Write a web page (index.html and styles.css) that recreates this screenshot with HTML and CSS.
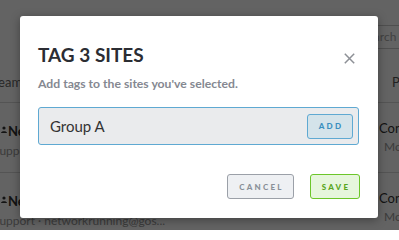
FILE: index.html
```html
<!DOCTYPE html>
<html>
<head>
<meta charset="utf-8">
<link rel="stylesheet" href="styles.css">
</head>
<body>
<div class="page">
  <div class="head-row">
    <div class="head-left">Team</div>
    <div class="head-right">
      <div class="search">Search</div>
      <div class="plan">Plan</div>
    </div>
  </div>
  <div class="row">
    <div class="site">
      <div class="site-name"><svg class="user" width="6" height="7" viewBox="0 0 6 7"><circle cx="3" cy="2" r="1.6" fill="#333"/><path d="M0 7 C0 4.5 6 4.5 6 7 Z" fill="#333"/></svg>Network Running</div>
      <div class="site-sub">Support · networkrunning@gos...</div>
    </div>
    <div class="status">
      <div class="status-main">Connected</div>
      <div class="status-sub">Monday</div>
    </div>
  </div>
  <div class="row">
    <div class="site">
      <div class="site-name"><svg class="user" width="6" height="7" viewBox="0 0 6 7"><circle cx="3" cy="2" r="1.6" fill="#333"/><path d="M0 7 C0 4.5 6 4.5 6 7 Z" fill="#333"/></svg>Network Running</div>
      <div class="site-sub">Support · networkrunning@gos...</div>
    </div>
    <div class="status">
      <div class="status-main">Connected</div>
      <div class="status-sub">Monday</div>
    </div>
  </div>
</div>
<div class="backdrop"></div>
<div class="modal">
  <div class="modal-head">
    <h1 class="title">TAG 3 SITES</h1>
    <svg class="close" width="11" height="11" viewBox="0 0 11 11"><path d="M0.8 0.8 L10.2 10.2 M10.2 0.8 L0.8 10.2" stroke="#8d9096" stroke-width="1.5" fill="none"/></svg>
  </div>
  <p class="subtitle">Add tags to the sites you've selected.</p>
  <div class="tag-input">
    <span class="tag-text">Group A</span>
    <button class="btn btn-add">ADD</button>
  </div>
  <div class="actions">
    <button class="btn btn-cancel">CANCEL</button>
    <button class="btn btn-save">SAVE</button>
  </div>
</div>
</body>
</html>
```
FILE: styles.css
```css
* { box-sizing: border-box; }
html, body { margin: 0; padding: 0; }
body {
  width: 399px;
  height: 230px;
  overflow: hidden;
  position: relative;
  background: #fff;
  font-family: Lato, "Liberation Sans", sans-serif;
  color: #333;
}
.page { width: 399px; overflow: hidden; }
.head-row {
  height: 103px;
  border-bottom: 1px solid #d8d8d8;
  display: flex;
  justify-content: space-between;
}
.head-left {
  margin-top: 74px;
  margin-left: -8px;
  font-size: 13px;
  color: #666;
}
.head-right {
  display: flex;
  flex-direction: column;
  align-items: flex-start;
  width: 40px;
}
.search {
  margin-top: 25px;
  height: 24px;
  width: 60px;
  margin-left: -20px;
  border-top: 1px solid #ccc;
  border-bottom: 1px solid #ccc;
  padding-left: 22px;
  font-size: 12px;
  line-height: 22px;
  color: #aaa;
}
.plan {
  margin-top: 25px;
  margin-left: 33px;
  font-size: 13px;
  color: #555;
  white-space: nowrap;
}
.row {
  height: 70px;
  border-bottom: 1px solid #d8d8d8;
  display: flex;
  justify-content: space-between;
}
.site { padding-top: 20px; white-space: nowrap; }
.site-name {
  font-size: 13px;
  font-weight: 700;
  color: #333;
  display: flex;
  align-items: center;
  gap: 1px;
  margin-left: 1px;
}
.user { margin-top: -4px; }
.site-sub {
  font-size: 12px;
  color: #999;
  margin-top: 4px;
  margin-left: -7px;
}
.status { width: 21px; padding-top: 17px; white-space: nowrap; }
.status-main { font-size: 13px; color: #333; margin-left: 1px; }
.status-sub { font-size: 12px; color: #999; margin-top: 3px; margin-left: 6px; }
.backdrop {
  position: absolute;
  inset: 0;
  background: rgba(0, 0, 0, 0.61);
}
.modal {
  position: absolute;
  left: 20px;
  top: 16px;
  width: 358px;
  height: 202px;
  background: #fff;
  border-radius: 3px;
  box-shadow: 0 2px 10px rgba(0, 0, 0, 0.35);
  padding: 28px 19px 18px 18px;
  display: flex;
  flex-direction: column;
}
.modal > * { flex-shrink: 0; }
.modal-head {
  display: flex;
  justify-content: space-between;
  align-items: flex-start;
}
.title {
  margin: 0;
  font-size: 19px;
  line-height: 22px;
  font-weight: 700;
  color: #2b2d33;
}
.close { margin-top: 9px; margin-right: 4px; }
.subtitle {
  margin: 11px 0 0 0;
  font-size: 12.2px;
  line-height: 14px;
  color: #858891;
  font-weight: 700;
}
.tag-input {
  margin-top: 16px;
  height: 38px;
  border: 1px solid #5fa9d2;
  border-radius: 3px;
  background: #eaebed;
  display: flex;
  align-items: center;
  justify-content: space-between;
  padding: 0 5px 0 11px;
}
.tag-text { font-size: 15px; color: #333; font-weight: 400; }
.btn {
  font-family: Lato, "Liberation Sans", sans-serif;
  font-weight: 900;
  font-size: 8px;
  letter-spacing: 2.2px;
  height: 25px;
  border-radius: 3px;
  padding: 0 0 0 2px;
  display: flex;
  align-items: center;
  justify-content: center;
}
.btn-add {
  width: 46px;
  background: #d4e3ea;
  border: 1px solid #5fa9d2;
  color: #3a8fc0;
}
.actions {
  margin-top: 29px;
  margin-right: -1px;
  display: flex;
  justify-content: flex-end;
  gap: 16px;
}
.btn-cancel {
  width: 67px;
  background: #eef0f3;
  border: 1px solid #9ba0a8;
  color: #8a9099;
}
.btn-save {
  width: 50px;
  background: #e6f6dc;
  border: 1px solid #6cc62a;
  color: #5aa61e;
}
```
